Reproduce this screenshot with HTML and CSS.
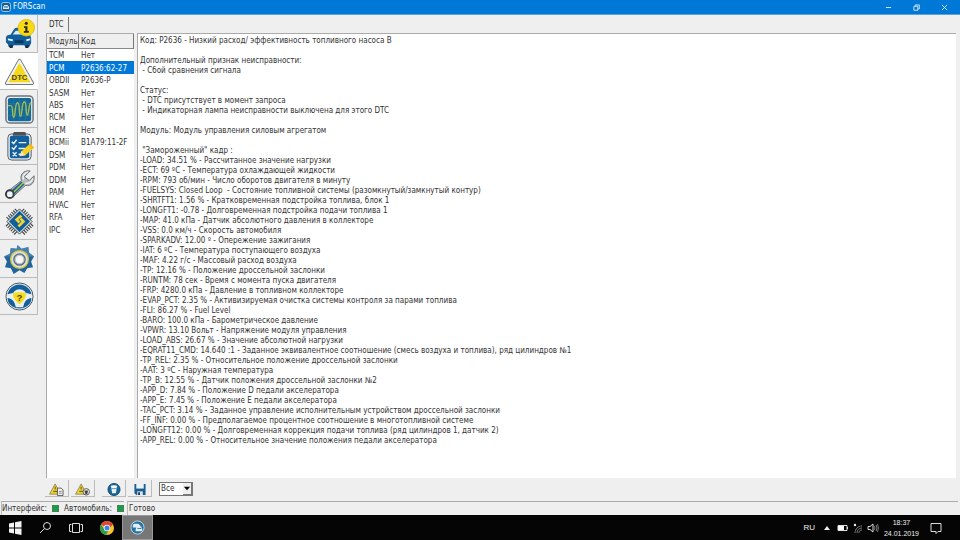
FILE: index.html
```html
<!DOCTYPE html>
<html lang="ru">
  <head>
    <meta charset="UTF-8" />
    <meta name="viewport" content="width=device-width, initial-scale=1.0" />
    <title>FORScan</title>
    <link rel="stylesheet" href="styles.css" />
  </head>
  <body>
    <header class="title-bar">
      <svg class="app-icon" viewBox="0 0 10 10">
        <rect x="0.5" y="0.5" width="9" height="9" rx="2" fill="#1c5f8c" stroke="#9cc4dc" />
        <path d="M2 5l1.4-2h3.2L8 5v2H2z" fill="#d7ecf7" />
        <path d="M3 5h4" stroke="#1c5f8c" />
      </svg>
      <h1>FORScan</h1>
      <div class="window-buttons">
        <button type="button" aria-label="Свернуть">
          <svg viewBox="0 0 8 8"><path d="M1 4h6" /></svg>
        </button>
        <button type="button" aria-label="Свернуть в окно">
          <svg viewBox="0 0 8 8"><path d="M1 2.7h4.5v4.5H1zM2.6 2.7V1h4.6v4.6H5.6" /></svg>
        </button>
        <button type="button" aria-label="Закрыть">
          <svg viewBox="0 0 8 8"><path d="M1 1l6 6M7 1L1 7" /></svg>
        </button>
      </div>
    </header>

    <div class="workspace">
      <nav class="sidebar">
        <button type="button" aria-label="Автомобиль">
          <svg viewBox="0 0 32 32">
            <path d="M2 19l1-2 4-1 3-5q1-2 3-2h9l5 7 1 4v5l-2 4h-4l-1-2H10l-1 2H5l-1-3-2-2z" fill="#0f5d9b" />
            <path d="M9 16l3-4h9l3 4z" fill="#dcecf5" />
            <path d="M4 20l5 1v2l-5-1zM27 20l-4 1v2l4-1z" fill="#e9f4fa" />
            <path d="M11 22h9v3h-9z" fill="#0a355c" />
            <path d="M5 27h4v3H6zM22 27h4l-1 3h-3z" fill="#1b2b3a" />
            <circle cx="23" cy="9" r="8.500" fill="#f8d914" stroke="#dfbd16" />
            <circle cx="23" cy="4.500" r="1.600" fill="#2b2b20" />
            <path d="M20.700 7.500h3.500v5h1.500v1.800h-5.200v-1.800H22V9.300h-1.300z" fill="#2b2b20" />
          </svg>
        </button>
        <button type="button" class="active" aria-label="DTC">
          <svg viewBox="0 0 32 32">
            <path d="M16 5L29 28H3z" fill="#dfe3e5" stroke="#70777b" stroke-width="4" stroke-linejoin="round" />
            <path d="M16 5L29 28H3z" fill="#f7d91c" stroke="#f2f4f4" stroke-width="2" stroke-linejoin="round" />
            <text x="16" y="25" class="dtc-mark">DTC</text>
          </svg>
        </button>
        <button type="button" aria-label="Графики">
          <svg viewBox="0 0 32 32">
            <rect x="2" y="2" width="28" height="28" rx="4" fill="#eef2f4" stroke="#6b7479" stroke-width="1.500" />
            <rect x="4" y="4" width="24" height="24" rx="2" fill="#14679a" />
            <path d="M4 10h24M4 16h24M4 22h24M10 4v24M16 4v24M22 4v24" stroke="#20759f" />
            <path d="M4 12h3c3 0 1 12 3 12s1-15 4-15 1 14 3 14 1-15 4-15 1 14 3 14 1-13 4-13" fill="none" stroke="#9fbc52" stroke-width="1.500" />
          </svg>
        </button>
        <button type="button" aria-label="Тесты">
          <svg viewBox="0 0 32 32">
            <rect x="4" y="3" width="24" height="27" rx="4" fill="#e9edf0" stroke="#4f5b64" />
            <rect x="6" y="5" width="20" height="23" rx="2" fill="#135f9d" />
            <path d="M10 1h12l1 4H9z" fill="#4b5257" />
            <path d="M8 11l2 2 3-4M8 17l2 2 3-4M9 22l4 4M13 22l-4 4M15 12h8M15 18h7M15 24h3" fill="none" stroke="#e5f0f6" stroke-width="1.500" />
            <path d="M27 13l4 4-9 8-6 1 2-5z" fill="#f6d322" />
            <path d="M27 13l4 4-2 2-4-4z" fill="#f3b52b" />
            <path d="M18 21l4 4-6 1z" fill="#f5e8bf" />
          </svg>
        </button>
        <button type="button" aria-label="Сервис">
          <svg viewBox="0 0 32 32">
            <path d="M27 2c-7-1-11 4-9 10L4 23l5 6 13-12c6 1 10-3 9-10l-5 5-5-4z" fill="#b6bcbf" stroke="#697276" stroke-linejoin="round" />
            <path d="M8 22L18 13l3 3L11 26z" fill="#1b6295" />
            <path d="M9 25L20 14" stroke="#b6c83d" stroke-width="1.500" />
            <circle cx="6" cy="26" r="4" fill="#f0f2f2" stroke="#353f44" stroke-width="2" />
            <path d="M25 3c-4 1-6 4-5 8M30 10c-2 4-5 5-8 5" fill="none" stroke="#eef1f2" stroke-width="1.500" />
          </svg>
        </button>
        <button type="button" aria-label="Конфигурация">
          <svg viewBox="0 0 32 32">
            <path d="M14 5L4 15M18 5l10 10M28 18L18 28M4 18l10 10" fill="none" stroke="#42494d" stroke-width="7" stroke-dasharray="1.200 1.200" />
            <path d="M16 3L29 16 16 29 3 16z" fill="#e8edf0" stroke="#3d474d" stroke-linejoin="round" />
            <path d="M16 5L27 16 16 27 5 16z" fill="#125e99" />
            <path d="M17 9l-6 5 4 4 2-2-2-2 4-3zM18 12l4 4-6 6-2-2 4-4-2-2z" fill="#f2d334" />
          </svg>
        </button>
        <button type="button" aria-label="Настройки">
          <svg viewBox="0 0 32 32">
            <path d="M14 1l4 4 7-2 1 6 5 4-3 5 2 6-6 1-3 5-5-3-6 4-3-6-6-1 2-6-3-5 6-3 1-6 6 1z" fill="#23659a" />
            <path d="M14 1l4 4 7-2 1 6 5 4H0l6-3 1-6 6 1z" fill="#5b92bd" opacity="0.600" />
            <circle cx="16" cy="16" r="9" fill="#d9e2e7" stroke="#d7c642" stroke-width="1.500" />
            <circle cx="16" cy="16" r="6.500" fill="#5b6870" />
            <circle cx="16" cy="16" r="4.500" fill="#f5f6f7" stroke="#bdc4c8" stroke-width="1.500" />
          </svg>
        </button>
        <button type="button" aria-label="Справка">
          <svg viewBox="0 0 32 32">
            <circle cx="16" cy="16" r="14" fill="#e7edf0" stroke="#46535c" />
            <circle cx="16" cy="16" r="10" fill="none" stroke="#135f9d" stroke-width="5" />
            <path d="M3 14c7-3 19-3 26 0v4c-4-1-8 3-9 9h-8c-1-6-5-10-9-9z" fill="#e9eef0" />
            <path d="M4 18c5 0 7 4 8 9-5-1-8-4-8-9zM28 18c-5 0-7 4-8 9 5-1 8-4 8-9z" fill="#135f9d" />
            <path d="M9 13q7-3 14 0-1 7-7 11-6-4-7-11z" fill="#f7dc1c" />
            <text x="16" y="21" class="help-mark">?</text>
          </svg>
        </button>
      </nav>

      <main class="content">
        <div class="tabs" role="tablist">
          <button type="button" role="tab" aria-selected="true">DTC</button>
        </div>
        <div class="panes">
          <section class="module-pane">
            <table>
              <thead>
                <tr>
                  <th>Модуль</th>
                  <th>Код</th>
                </tr>
              </thead>
              <tbody>
                <tr><td>TCM</td><td>Нет</td></tr>
                <tr class="selected"><td>PCM</td><td>P2636:62-27</td></tr>
                <tr><td>OBDII</td><td>P2636-P</td></tr>
                <tr><td>SASM</td><td>Нет</td></tr>
                <tr><td>ABS</td><td>Нет</td></tr>
                <tr><td>RCM</td><td>Нет</td></tr>
                <tr><td>HCM</td><td>Нет</td></tr>
                <tr><td>BCMii</td><td>B1A79:11-2F</td></tr>
                <tr><td>DSM</td><td>Нет</td></tr>
                <tr><td>PDM</td><td>Нет</td></tr>
                <tr><td>DDM</td><td>Нет</td></tr>
                <tr><td>PAM</td><td>Нет</td></tr>
                <tr><td>HVAC</td><td>Нет</td></tr>
                <tr><td>RFA</td><td>Нет</td></tr>
                <tr><td>IPC</td><td>Нет</td></tr>
              </tbody>
            </table>
          </section>
          <section class="details">
<pre>Код: P2636 - Низкий расход/ эффективность топливного насоса B

Дополнительный признак неисправности:
 - Сбой сравнения сигнала

Статус:
 - DTC присутствует в момент запроса
 - Индикаторная лампа неисправности выключена для этого DTC

Модуль: Модуль управления силовым агрегатом

 "Замороженный" кадр :
-LOAD: 34.51 % - Рассчитанное значение нагрузки
-ECT: 69 ºC - Температура охлаждающей жидкости
-RPM: 793 об/мин - Число оборотов двигателя в минуту
-FUELSYS: Closed Loop  - Состояние топливной системы (разомкнутый/замкнутый контур)
-SHRTFT1: 1.56 % - Кратковременная подстройка топлива, блок 1
-LONGFT1: -0.78 - Долговременная подстройка подачи топлива 1
-MAP: 41.0 кПа - Датчик абсолютного давления в коллекторе
-VSS: 0.0 км/ч - Скорость автомобиля
-SPARKADV: 12.00 º - Опережение зажигания
-IAT: 6 ºC - Температура поступающего воздуха
-MAF: 4.22 г/с - Массовый расход воздуха
-TP: 12.16 % - Положение дроссельной заслонки
-RUNTM: 78 сек - Время с момента пуска двигателя
-FRP: 4280.0 кПа - Давление в топливном коллекторе
-EVAP_PCT: 2.35 % - Активизируемая очистка системы контроля за парами топлива
-FLI: 86.27 % - Fuel Level
-BARO: 100.0 кПа - Барометрическое давление
-VPWR: 13.10 Вольт - Напряжение модуля управления
-LOAD_ABS: 26.67 % - Значение абсолютной нагрузки
-EQRAT11_CMD: 14.640 :1 - Заданное эквивалентное соотношение (смесь воздуха и топлива), ряд цилиндров №1
-TP_REL: 2.35 % - Относительное положение дроссельной заслонки
-AAT: 3 ºC - Наружная температура
-TP_B: 12.55 % - Датчик положения дроссельной заслонки №2
-APP_D: 7.84 % - Положение D педали акселератора
-APP_E: 7.45 % - Положение E педали акселератора
-TAC_PCT: 3.14 % - Заданное управление исполнительным устройством дроссельной заслонки
-FF_INF: 0.00 % - Предполагаемое процентное соотношение в многотопливной системе
-LONGFT12: 0.00 % - Долговременная коррекция подачи топлива (ряд цилиндров 1, датчик 2)
-APP_REL: 0.00 % - Относительное значение положения педали акселератора</pre>
          </section>
        </div>
        <div class="toolbar">
          <button type="button" aria-label="Прочитать DTC">
            <svg viewBox="0 0 16 14">
              <path d="M6 1l6 11H0z" fill="#f4d32a" stroke="#8f8a60" stroke-linejoin="round" />
              <path d="M4 9h5M6 4v3" stroke="#4b4723" />
              <path d="M8.500 5.500h4l2 2v6h-6z" fill="#f5f5f2" stroke="#55585a" />
              <path d="M10 9h3M10 11h3" stroke="#777" />
            </svg>
          </button>
          <button type="button" aria-label="Сбросить DTC">
            <svg viewBox="0 0 16 14">
              <path d="M6 1l6 11H0z" fill="#f4d32a" stroke="#8f8a60" stroke-linejoin="round" />
              <path d="M4 9h5M6 4v3" stroke="#4b4723" />
              <circle cx="11.500" cy="9.500" r="3.500" fill="#eee" stroke="#55585a" />
              <path d="M9.500 8h4l-1 4h-2z" fill="#444" />
            </svg>
          </button>
          <button type="button" class="gap-before" aria-label="Очистить">
            <svg viewBox="0 0 14 14">
              <circle cx="7" cy="7" r="6.500" fill="#186598" stroke="#0d4a78" />
              <path d="M4 5h6l-1 6H5z" fill="#e5eff5" />
              <ellipse cx="7" cy="4" rx="3.500" ry="1.500" fill="#fff" />
              <path d="M4 6h6" stroke="#5d98bd" />
            </svg>
          </button>
          <button type="button" aria-label="Сохранить">
            <svg viewBox="0 0 14 14">
              <path d="M1 1h12v12H3l-2-2z" fill="#185d93" />
              <path d="M3 1h8v5H3z" fill="#eef4f7" />
              <path d="M4 9h6v4H4z" fill="#dce5ea" />
              <path d="M5 10h2v3H5z" fill="#183c58" />
            </svg>
          </button>
          <span class="filter">
            <select aria-label="Фильтр">
              <option>Все</option>
            </select>
            <svg viewBox="0 0 9 10"><path d="M1 3h7L4.500 7z" /></svg>
          </span>
        </div>
      </main>
    </div>

    <footer class="status-bar">
      <div class="links">
        <span>Интерфейс:</span><i class="led"></i>
        <span>Автомобиль:</span><i class="led"></i>
      </div>
      <div class="message">Готово</div>
    </footer>

    <div class="taskbar">
      <button type="button" aria-label="Пуск">
        <svg viewBox="0 0 14 14"><path d="M1 2.500l5-1v5H1zM7 1.300L13.500 0v6.500H7zM1 7.500h5v5l-5-1zM7 7.500h6.500V14L7 12.700z" fill="#f4f4f4" /></svg>
      </button>
      <button type="button" aria-label="Поиск">
        <svg viewBox="0 0 14 14"><circle cx="9" cy="5" r="3.500" class="line" /><path d="M6.500 7.500L2 12" class="line" /></svg>
      </button>
      <button type="button" aria-label="Представление задач">
        <svg viewBox="0 0 14 14"><path d="M3.500 2.500h7v9h-7zM2.500 3.500h-2v7h2M11.500 3.500h2v7h-2" class="line" /></svg>
      </button>
      <button type="button" aria-label="Chrome">
        <svg viewBox="0 0 14 14">
          <circle cx="7" cy="7" r="7" fill="#f5c529" />
          <path d="M7 7L1 3.500A7 7 0 0 1 13 3.500z" fill="#df4735" />
          <path d="M1 3.500A7 7 0 0 0 6 14L9 9 4 8z" fill="#2d9c50" />
          <path d="M6 3.500h7l-3 3z" fill="#df4735" />
          <circle cx="7" cy="7" r="3.200" fill="#fff" />
          <circle cx="7" cy="7" r="2.500" fill="#3e82e5" />
        </svg>
      </button>
      <button type="button" class="running" aria-label="FORScan">
        <svg viewBox="0 0 16 16">
          <circle cx="8" cy="8" r="7" fill="#24729f" stroke="#c7dbe6" />
          <path d="M3 6l1-2h5l2 2v2H3z" fill="#e3eff5" />
          <path d="M6 10l1-3h5l1 3v2H6z" fill="#e3eff5" />
          <path d="M8 9h4" stroke="#24729f" />
        </svg>
      </button>
      <div class="tray">
        <span>RU</span>
        <svg class="arrow" viewBox="0 0 6 6"><path d="M0 5l3-4 3 4z" fill="#eee" /></svg>
        <svg viewBox="0 0 12 12"><path d="M1 3.500h9v5H1zM10.500 5v2" class="line" /><path d="M1 4h6v4H1z" fill="#fff" /></svg>
        <svg viewBox="0 0 12 12">
          <path d="M3 11c0-4 3-7 7-7M5 11c0-3 2-5 5-5M7 11c0-2 1-3 3-3" fill="none" stroke="#777" />
          <circle cx="3" cy="3" r="1.200" fill="#eee" />
        </svg>
        <svg viewBox="0 0 12 12">
          <path d="M1 4.500h2l3-2.500v8L3 7.500H1z" class="line" />
          <path d="M7.500 4q1 2 0 4M9 3q2 3 0 6M10.500 2q2 4 0 8" fill="none" stroke="#777" />
        </svg>
        <div class="clock">
          <time>18:37</time>
          <span>24.01.2019</span>
        </div>
        <svg viewBox="0 0 12 12"><path d="M1 1.500h10v8H8l-2 2v-2H1z" class="line" /></svg>
      </div>
    </div>
  </body>
</html>
```
FILE: styles.css
```css
* {
  box-sizing: border-box;
}

/* body styles */
body {
  margin: 0;
  height: 100vh;
  display: flex;
  flex-direction: column;
  background-color: #efefef;
  color: #333;
  font-family: "DejaVu Sans Condensed", "DejaVu Sans", sans-serif;
  font-size: 8px;
  line-height: 10px;
}

button,
select {
  margin: 0;
  padding: 0;
  border: none;
  background: none;
  color: inherit;
  font: inherit;
}

svg {
  display: block;
  flex: none;
}

/* title bar */
.title-bar {
  display: flex;
  align-items: center;
  height: 15px;
  padding-left: 1px;
  background-color: #0078d7;
  border-bottom: 1px solid #5aa5df;
  color: #fff;
}

.title-bar h1 {
  margin: 0 auto 0 2px;
  font-size: 8px;
  font-weight: normal;
}

.app-icon {
  width: 10px;
  height: 10px;
}

.window-buttons {
  display: flex;
}

.window-buttons button {
  width: 28px;
  height: 14px;
  display: grid;
  place-items: center;
}

.window-buttons button:last-child {
  margin-right: 2px;
}

.window-buttons svg {
  width: 7px;
  height: 7px;
  fill: none;
  stroke: #e2effa;
}

/* sidebar */
.workspace {
  flex: 1;
  min-height: 0;
  display: flex;
}

.sidebar {
  width: 38px;
  height: 300px;
  display: grid;
  grid-auto-rows: 1fr;
}

.sidebar button {
  display: grid;
  place-items: center;
  padding: 2px 0 0 2px;
  border-right: 1px solid #bbb;
  border-bottom: 1px solid #bbb;
}

.sidebar button.active {
  background-color: #fff;
  border-right-color: #fff;
}

.sidebar svg {
  width: 31px;
  height: 31px;
}

.dtc-mark,
.help-mark {
  font-family: "Liberation Sans", sans-serif;
  font-weight: bold;
  text-anchor: middle;
  fill: #4a4520;
}

.dtc-mark {
  font-size: 8px;
}

.help-mark {
  font-size: 10px;
}

/* content */
.content {
  flex: 1;
  min-width: 0;
  display: flex;
  flex-direction: column;
  padding: 2px 4px 2px 8px;
}

.tabs {
  height: 16px;
}

.tabs button {
  height: 15px;
  padding: 1px 4px 0 3px;
  border-right: 1px solid #777;
}

.panes {
  flex: 1;
  min-height: 0;
  display: flex;
  gap: 3px;
}

.module-pane,
.details {
  background-color: #fff;
  border-top: 1px solid #aaa;
  border-left: 1px solid #aaa;
}

.module-pane {
  width: 88px;
}

.module-pane table {
  width: 100%;
  height: 202px;
  border-collapse: separate;
  border-spacing: 0;
  table-layout: fixed;
}

th,
td {
  padding: 1px 0 0 2px;
  text-align: left;
  white-space: nowrap;
}

th {
  height: 15px;
  background-color: #efefef;
  border-right: 1px solid #777;
  border-bottom: 1px solid #888;
  font-weight: normal;
}

th:first-child {
  width: 32px;
}

td {
  line-height: 11px;
}

tr.selected {
  background-color: #0078d7;
  color: #fff;
}

.details {
  flex: 1;
  min-width: 0;
  padding: 2px;
  overflow: hidden;
}

.details pre {
  margin: 0;
  font: inherit;
}

/* toolbar */
.toolbar {
  display: flex;
  align-items: center;
  height: 21px;
  margin-left: -1px;
  gap: 2px;
}

.toolbar button {
  width: 24px;
  height: 17px;
  display: grid;
  place-items: center;
  padding-top: 2px;
  border-right: 1px solid #bbb;
  border-bottom: 1px solid #bbb;
}

.toolbar .gap-before {
  margin-left: 5px;
}

.toolbar button svg {
  width: 16px;
  height: 13px;
}

.filter {
  display: flex;
  width: 34px;
  height: 14px;
  margin-left: 5px;
  background-color: #fff;
  border: 1px solid #777;
  position: relative;
}

.filter select {
  width: 100%;
  padding: 1px 0 0 1px;
  appearance: none;
}

.filter svg {
  position: absolute;
  top: 0;
  right: 0;
  width: 9px;
  height: 12px;
  background-color: #efefef;
  border-right: 1px solid #777;
  border-bottom: 1px solid #777;
  pointer-events: none;
}

/* status bar */
.status-bar {
  display: flex;
  gap: 3px;
  height: 14px;
  padding: 0 2px 0 1px;
  line-height: 13px;
}

.status-bar .links,
.status-bar .message {
  border-top: 1px solid #aaa;
  border-left: 1px solid #bbb;
}

.links {
  display: flex;
  align-items: center;
  justify-content: space-between;
  width: 123px;
}

.led {
  width: 7px;
  height: 7px;
  background-color: #15a046;
  border: 1px solid #4b7d5a;
}

.message {
  flex: 1;
  padding-left: 1px;
}

/* taskbar */
.taskbar {
  display: flex;
  height: 25px;
  background-color: #050505;
  color: #eee;
}

.taskbar button {
  width: 31px;
  display: grid;
  place-items: center;
}

.taskbar button:first-child {
  width: 29px;
}

.taskbar button svg {
  width: 14px;
  height: 14px;
}

.taskbar .running {
  background-color: #777;
  border: 1px solid #999;
}

.taskbar .running svg {
  width: 15px;
  height: 15px;
}

.line {
  fill: none;
  stroke: #ddd;
}

.tray {
  display: flex;
  align-items: center;
  gap: 3px;
  margin-left: auto;
  padding-right: 18px;
  font-family: "Liberation Sans", sans-serif;
}

.tray svg {
  width: 12px;
  height: 12px;
}

.tray .arrow {
  width: 6px;
  height: 6px;
  margin: 0 4px 0 6px;
}

.clock {
  display: flex;
  flex-direction: column;
  align-items: center;
  margin: 0 8px 0 2px;
  font-size: 7px;
  line-height: 11px;
}
```
